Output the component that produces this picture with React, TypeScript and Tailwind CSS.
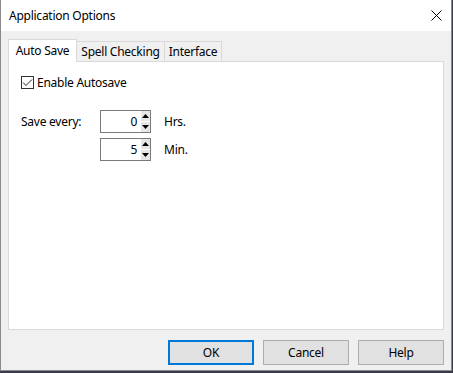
const font = { fontFamily: '"Segoe UI", "Noto Sans", sans-serif' };

function Spin({ value }: { value: string }) {
  return (
    <div className="flex h-[23px] w-[51px] border border-[#7a7a7a] bg-white">
      <div className="flex flex-1 items-center justify-end pr-[4px] text-[12px]">{value}</div>
      <div className="flex w-[9px] flex-col bg-[#e6e6e6]">
        <div className="flex flex-1 items-center justify-center border-b border-white">
          <svg width="7" height="4" viewBox="0 0 7 4">
            <path d="M0 4 L3.5 0 L7 4 Z" fill="#000" />
          </svg>
        </div>
        <div className="flex flex-1 items-center justify-center">
          <svg width="7" height="4" viewBox="0 0 7 4">
            <path d="M0 0 L3.5 4 L7 0 Z" fill="#000" />
          </svg>
        </div>
      </div>
    </div>
  );
}

export default function App() {
  return (
    <div className="h-[373px] w-[453px] bg-[#3a3a4a] text-[12px] tracking-[-0.25px] text-black" style={font}>
      <div className="flex h-[371px] w-[452px] flex-col border-x border-b border-[#8a8a8a]">
        {/* title bar */}
        <div className="flex h-[31px] items-center justify-between bg-white pl-[8px] pr-[9px]">
          <span className="text-[12px]">Application Options</span>
          <svg width="11" height="11" viewBox="0 0 11 11">
            <path d="M0.5 0.5 L10.5 10.5 M10.5 0.5 L0.5 10.5" stroke="#000" strokeWidth="1" />
          </svg>
        </div>

        <div className="flex flex-1 flex-col bg-[#f0f0f0] px-[7px] pt-[8px]">
          {/* tabs */}
          <div className="flex h-[22px] items-end">
            <div className="relative z-10 -mb-px flex h-[23px] w-[69px] items-start justify-center border-x border-t border-[#d9d9d9] bg-white pt-[2px]">
              Auto Save
            </div>
            <div className="flex h-[20px] w-[88px] items-center justify-center border-r border-t border-[#d9d9d9] pt-[1px]">
              Spell Checking
            </div>
            <div className="flex h-[20px] w-[57px] items-center justify-center border-r border-t border-[#d9d9d9] pt-[1px]">
              Interface
            </div>
          </div>

          {/* panel */}
          <div className="h-[269px] w-[436px] border border-[#d9d9d9] bg-white pl-[12px] pt-[14px]">
            <label className="flex h-[13px] items-center gap-[3px]">
              <span className="flex h-[13px] w-[13px] items-center justify-center border border-[#333]">
                <svg width="11" height="11" viewBox="0 0 11 11">
                  <path d="M1 5.5 L4 8.5 L10 2.5" stroke="#222" strokeWidth="1" fill="none" />
                </svg>
              </span>
              <span>Enable Autosave</span>
            </label>

            <div className="mt-[21px] flex flex-col gap-[5px]">
              <div className="flex items-center">
                <span className="w-[79px]">Save every:</span>
                <Spin value="0" />
                <span className="ml-[13px]">Hrs.</span>
              </div>
              <div className="flex items-center">
                <span className="w-[79px]" />
                <Spin value="5" />
                <span className="ml-[13px]">Min.</span>
              </div>
            </div>
          </div>

          {/* buttons */}
          <div className="mt-[10px] flex justify-end gap-[9px]">
            <button className="h-[25px] w-[86px] border-2 border-[#0078d7] bg-[#e1e1e1]">OK</button>
            <button className="h-[25px] w-[86px] border border-[#adadad] bg-[#e1e1e1]">Cancel</button>
            <button className="h-[25px] w-[86px] border border-[#adadad] bg-[#e1e1e1]">Help</button>
          </div>
        </div>
      </div>
    </div>
  );
}
